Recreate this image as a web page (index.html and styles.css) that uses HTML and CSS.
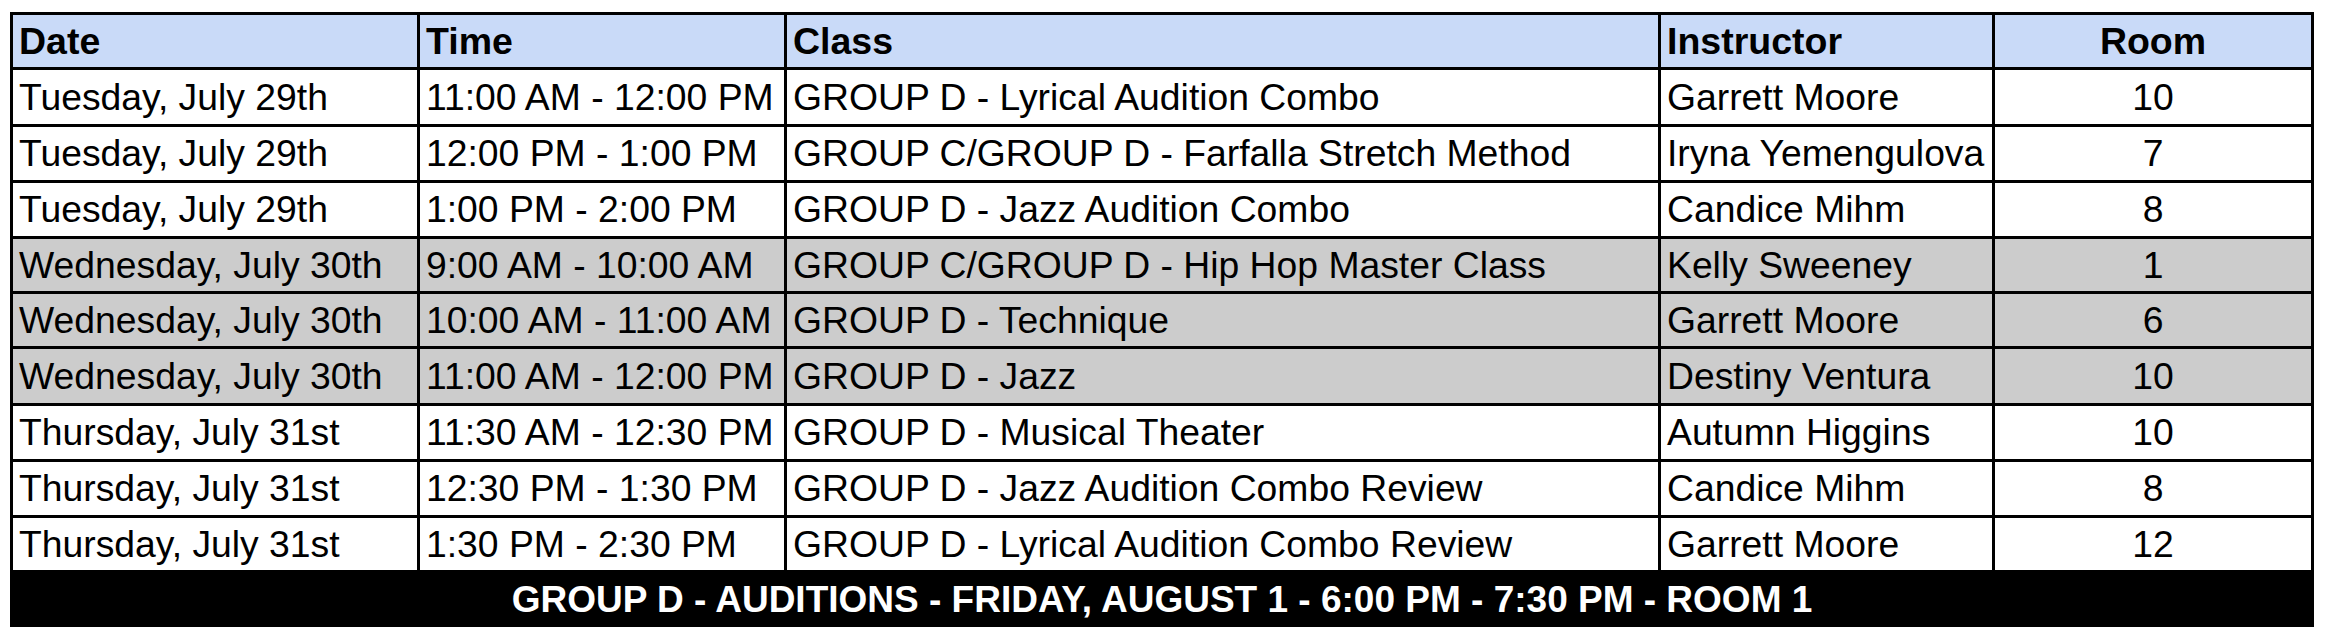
FILE: index.html
```html
<!DOCTYPE html>
<html lang="en">
<head>
<meta charset="utf-8">
<title>Group D Schedule</title>
<link rel="stylesheet" href="styles.css">
</head>
<body>
<div class="sheet">
  <div class="row head">
    <div class="cell">Date</div>
    <div class="cell">Time</div>
    <div class="cell">Class</div>
    <div class="cell">Instructor</div>
    <div class="cell center">Room</div>
  </div>
  <div class="row">
    <div class="cell">Tuesday, July 29th</div>
    <div class="cell">11:00 AM - 12:00 PM</div>
    <div class="cell">GROUP D - Lyrical Audition Combo</div>
    <div class="cell">Garrett Moore</div>
    <div class="cell center">10</div>
  </div>
  <div class="row">
    <div class="cell">Tuesday, July 29th</div>
    <div class="cell">12:00 PM - 1:00 PM</div>
    <div class="cell">GROUP C/GROUP D - Farfalla Stretch Method</div>
    <div class="cell">Iryna Yemengulova</div>
    <div class="cell center">7</div>
  </div>
  <div class="row">
    <div class="cell">Tuesday, July 29th</div>
    <div class="cell">1:00 PM - 2:00 PM</div>
    <div class="cell">GROUP D - Jazz Audition Combo</div>
    <div class="cell">Candice Mihm</div>
    <div class="cell center">8</div>
  </div>
  <div class="row alt">
    <div class="cell">Wednesday, July 30th</div>
    <div class="cell">9:00 AM - 10:00 AM</div>
    <div class="cell">GROUP C/GROUP D - Hip Hop Master Class</div>
    <div class="cell">Kelly Sweeney</div>
    <div class="cell center">1</div>
  </div>
  <div class="row alt">
    <div class="cell">Wednesday, July 30th</div>
    <div class="cell">10:00 AM - 11:00 AM</div>
    <div class="cell">GROUP D - Technique</div>
    <div class="cell">Garrett Moore</div>
    <div class="cell center">6</div>
  </div>
  <div class="row alt">
    <div class="cell">Wednesday, July 30th</div>
    <div class="cell">11:00 AM - 12:00 PM</div>
    <div class="cell">GROUP D - Jazz</div>
    <div class="cell">Destiny Ventura</div>
    <div class="cell center">10</div>
  </div>
  <div class="row">
    <div class="cell">Thursday, July 31st</div>
    <div class="cell">11:30 AM - 12:30 PM</div>
    <div class="cell">GROUP D - Musical Theater</div>
    <div class="cell">Autumn Higgins</div>
    <div class="cell center">10</div>
  </div>
  <div class="row">
    <div class="cell">Thursday, July 31st</div>
    <div class="cell">12:30 PM - 1:30 PM</div>
    <div class="cell">GROUP D - Jazz Audition Combo Review</div>
    <div class="cell">Candice Mihm</div>
    <div class="cell center">8</div>
  </div>
  <div class="row">
    <div class="cell">Thursday, July 31st</div>
    <div class="cell">1:30 PM - 2:30 PM</div>
    <div class="cell">GROUP D - Lyrical Audition Combo Review</div>
    <div class="cell">Garrett Moore</div>
    <div class="cell center">12</div>
  </div>
  <div class="footer">GROUP D - AUDITIONS - FRIDAY, AUGUST 1 - 6:00 PM - 7:30 PM - ROOM 1</div>
</div>
</body>
</html>
```
FILE: styles.css
```css
html, body {
  margin: 0;
  padding: 0;
  background: #ffffff;
}

body {
  font-family: "Liberation Sans", Arial, sans-serif;
  color: #000000;
}

.sheet {
  display: grid;
  grid-template-columns: 404px 364px 871px 331px 316px;
  grid-template-rows: 52px 54px 53px 53px 52px 52px 54px 53px 53px 52px 54px;
  gap: 3px;
  padding: 3px 3px 0 3px;
  width: 2298px;
  margin: 12px 0 0 10px;
  background: #000000;
}

.row {
  display: contents;
}

.cell {
  display: flex;
  align-items: center;
  padding: 0 6px;
  background: #ffffff;
  font-size: 37.3px;
  white-space: nowrap;
  overflow: hidden;
}

.cell.center {
  justify-content: center;
}

.head .cell {
  background: #c9daf8;
  font-weight: bold;
  font-size: 37.5px;
}

.alt .cell {
  background: #cccccc;
}

.footer {
  grid-column: 1 / -1;
  display: flex;
  align-items: center;
  justify-content: center;
  background: #000000;
  color: #ffffff;
  font-size: 37px;
  font-weight: bold;
  white-space: nowrap;
}
```
